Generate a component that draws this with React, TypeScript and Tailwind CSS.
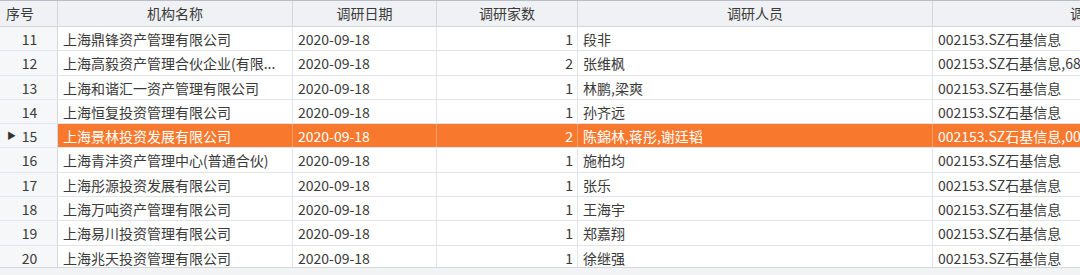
import React from 'react';

type Row = {
  no: number;
  name: string;
  date: string;
  count: number;
  people: string;
  target: string;
};

const rows: Row[] = [
  { no: 11, name: '上海鼎锋资产管理有限公司', date: '2020-09-18', count: 1, people: '段非', target: '002153.SZ石基信息' },
  { no: 12, name: '上海高毅资产管理合伙企业(有限...', date: '2020-09-18', count: 2, people: '张维枫', target: '002153.SZ石基信息,688088.SH虹软科技' },
  { no: 13, name: '上海和谐汇一资产管理有限公司', date: '2020-09-18', count: 1, people: '林鹏,梁爽', target: '002153.SZ石基信息' },
  { no: 14, name: '上海恒复投资管理有限公司', date: '2020-09-18', count: 1, people: '孙齐远', target: '002153.SZ石基信息' },
  { no: 15, name: '上海景林投资发展有限公司', date: '2020-09-18', count: 2, people: '陈錦林,蒋彤,谢廷韬', target: '002153.SZ石基信息,002410.SZ广联达' },
  { no: 16, name: '上海青沣资产管理中心(普通合伙)', date: '2020-09-18', count: 1, people: '施柏均', target: '002153.SZ石基信息' },
  { no: 17, name: '上海彤源投资发展有限公司', date: '2020-09-18', count: 1, people: '张乐', target: '002153.SZ石基信息' },
  { no: 18, name: '上海万吨资产管理有限公司', date: '2020-09-18', count: 1, people: '王海宇', target: '002153.SZ石基信息' },
  { no: 19, name: '上海易川投资管理有限公司', date: '2020-09-18', count: 1, people: '郑嘉翔', target: '002153.SZ石基信息' },
  { no: 20, name: '上海兆天投资管理有限公司', date: '2020-09-18', count: 1, people: '徐继强', target: '002153.SZ石基信息' },
];

const SELECTED = 15;

export default function App() {
  return (
    <div
      className="w-[1080px] h-[275px] overflow-hidden bg-white text-[14px] text-[#3a3a3a] flex flex-col"
      style={{ fontFamily: '"Noto Sans CJK SC", "Noto Sans", sans-serif' }}
    >
      {/* header */}
      <div className="flex h-[27px] shrink-0 border-t border-t-[#b9bec6] border-b border-b-[#d3d8df] bg-[#eff1f4] leading-[25px]">
        <div className="w-[58px] shrink-0 border-r border-[#d3d8df] pl-[6px]">序号</div>
        <div className="w-[235px] shrink-0 border-r border-[#d3d8df] text-center">机构名称</div>
        <div className="w-[144px] shrink-0 border-r border-[#d3d8df] text-center">调研日期</div>
        <div className="w-[141px] shrink-0 border-r border-[#d3d8df] text-center">调研家数</div>
        <div className="w-[355px] shrink-0 border-r border-[#d3d8df] text-center">调研人员</div>
        <div className="w-[330px] shrink-0 text-center">调研公司</div>
      </div>

      {/* body */}
      <div className="flex-1 overflow-hidden">
        {rows.map((r) => {
          const sel = r.no === SELECTED;
          const cell = sel
            ? 'bg-[#f8792d] text-white border-r border-[#fba16a]'
            : 'bg-white border-r border-[#e1e5ea]';
          return (
            <div key={r.no} className="flex h-[24.3px] leading-[24px] border-b border-[#e1e5ea]">
              <div className="relative w-[58px] shrink-0 border-r border-[#d3d8df] bg-[#f6f7f9] text-center pl-[2px]">
                {sel && (
                  <span className="absolute left-[7px] top-0 text-[9px] text-[#333]">▶</span>
                )}
                {r.no}
              </div>
              <div className={`w-[235px] shrink-0 px-[5px] whitespace-nowrap overflow-hidden ${cell}`}>{r.name}</div>
              <div className={`w-[144px] shrink-0 px-[5px] ${cell}`}>{r.date}</div>
              <div className={`w-[141px] shrink-0 px-[4px] text-right ${cell}`}>{r.count}</div>
              <div className={`w-[355px] shrink-0 px-[5px] whitespace-nowrap overflow-hidden ${cell}`}>{r.people}</div>
              <div className={`w-[330px] shrink-0 px-[5px] whitespace-nowrap overflow-hidden ${sel ? 'bg-[#f8792d] text-white' : 'bg-white'}`}>
                {r.target}
              </div>
            </div>
          );
        })}
      </div>

      {/* horizontal scroll strip */}
      <div className="h-[8px] shrink-0 border-t border-[#d3d8df] bg-[#f2f3f5]" />
    </div>
  );
}
